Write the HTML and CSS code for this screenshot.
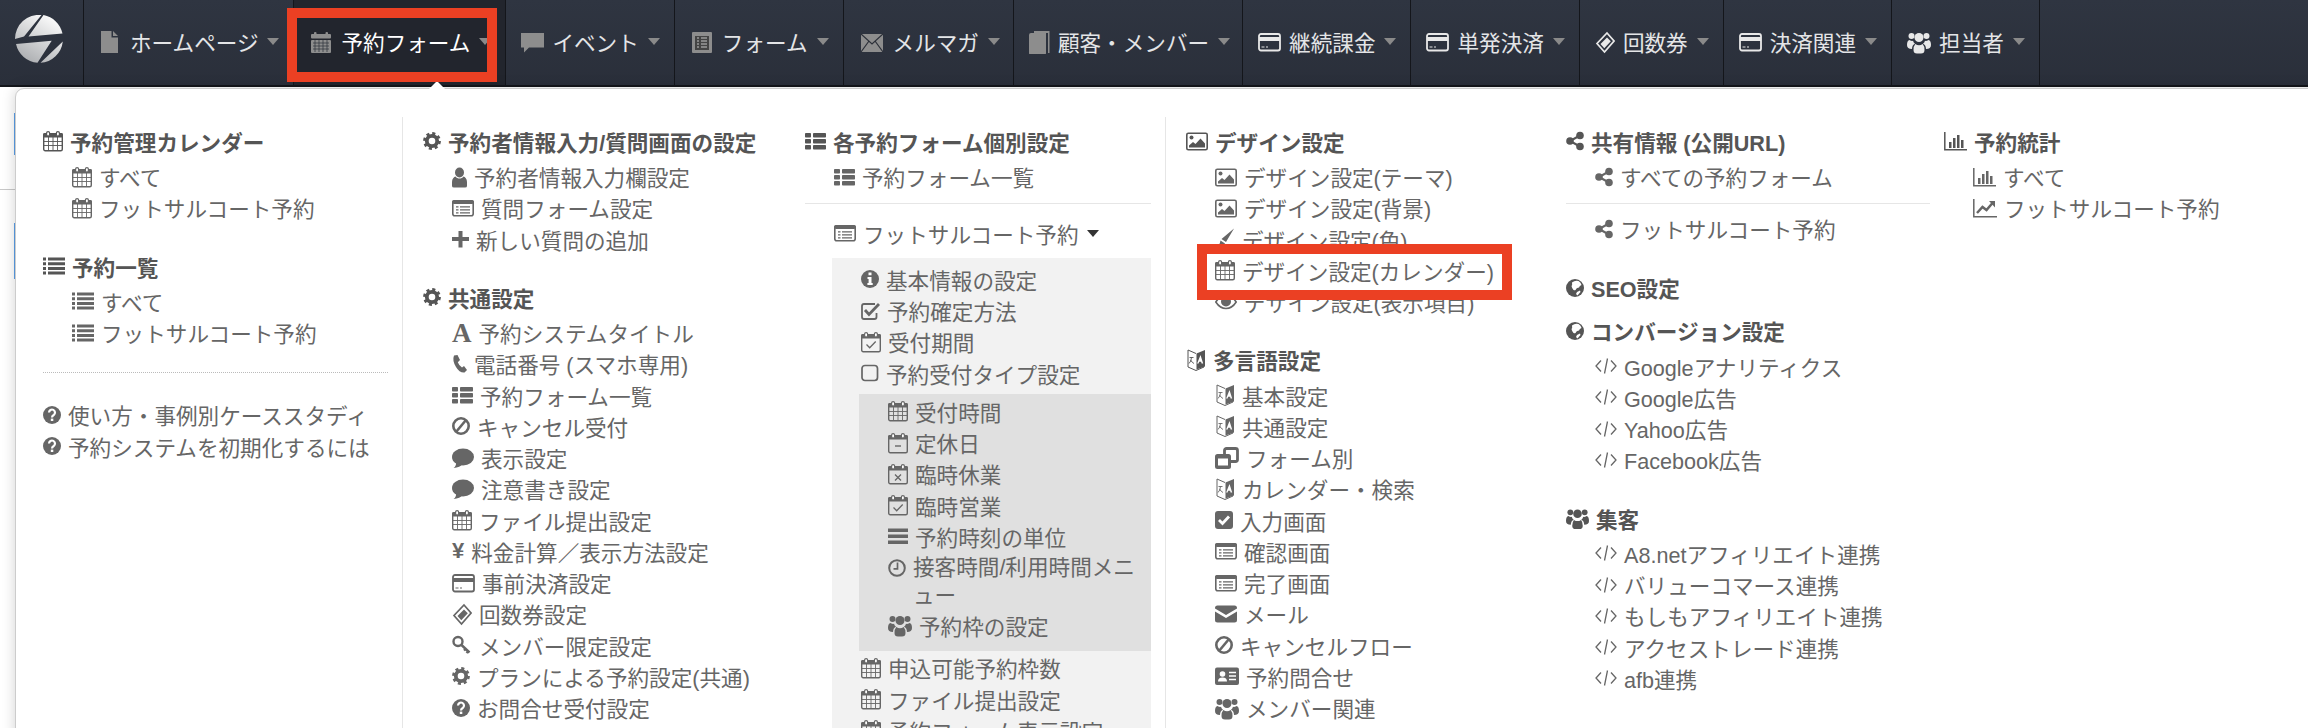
FILE: index.html
```html
<!DOCTYPE html>
<html lang="ja">
<head>
	<meta charset="UTF-8">
	<title>予約フォーム</title>
	<link rel="stylesheet" href="styles.css">
</head>
<body>
<svg class="sprite" aria-hidden="true">
	<defs>
		<linearGradient id="logograd" x1="0.8" y1="0" x2="0.2" y2="1">
			<stop offset="0" stop-color="#ffffff"/>
			<stop offset="1" stop-color="#a9abae"/>
		</linearGradient>
	</defs>
	<symbol id="calo" viewBox="0 0 20 24"><rect x=".7" y="4.7" width="18.6" height="17" rx="1.5" fill="none" stroke="currentColor" stroke-width="1.4"/><rect y="4" width="20" height="4.5" rx="1.5"/><rect x="3.6" y="2.6" width="3" height="4.4" rx="1.5" fill="#fff" stroke="currentColor" stroke-width="1.2"/><rect x="13.4" y="2.6" width="3" height="4.4" rx="1.5" fill="#fff" stroke="currentColor" stroke-width="1.2"/></symbol>
	<symbol id="cal" viewBox="0 0 20 24"><use href="#calo" width="20" height="24"/><path d="M1 12.5h18M1 16.5h18M5.5 8v13M10 8v13M14.5 8v13" fill="none" stroke="currentColor" stroke-width=".9"/></symbol>
	<symbol id="calcheck" viewBox="0 0 20 24"><use href="#calo" width="20" height="24"/><path d="M5.5 14.5l3.2 3.2 6-6.2" fill="none" stroke="currentColor" stroke-width="1.3"/></symbol>
	<symbol id="calminus" viewBox="0 0 20 24"><use href="#calo" width="20" height="24"/><path d="M7 15h6" fill="none" stroke="currentColor" stroke-width="1.4"/></symbol>
	<symbol id="caltimes" viewBox="0 0 20 24"><use href="#calo" width="20" height="24"/><path d="M7 12.5l6 6M13 12.5l-6 6" fill="none" stroke="currentColor" stroke-width="1.3"/></symbol>
	<symbol id="calnav" viewBox="0 0 20 24"><rect x="3" y="2" width="2.500" height="3" rx="1"/><rect x="14.500" y="2" width="2.500" height="3" rx="1"/><rect y="4" width="20" height="4.500" rx="1"/><rect y="10" width="20" height="13" rx="1"/><path d="M2 13h16M2 16h16M2 19h16M4 10v12M8 10v12M12 10v12M16 10v12" fill="none" stroke="#2c3039" stroke-width=".7"/></symbol>
	<symbol id="list" viewBox="0 0 22 24"><path d="M0 3.500h3v3H0zM5 3.500h17v3H5zM0 8.200h3v3H0zM5 8.200h17v3H5zM0 12.900h3v3H0zM5 12.900h17v3H5zM0 17.600h3v3H0zM5 17.600h17v3H5z"/></symbol>
	<symbol id="thlist" viewBox="0 0 21 24"><rect y="4" width="6" height="4.600" rx=".8"/><rect x="8" y="4" width="13" height="4.600" rx=".8"/><rect y="10" width="6" height="4.600" rx=".8"/><rect x="8" y="10" width="13" height="4.600" rx=".8"/><rect y="16" width="6" height="4.600" rx=".8"/><rect x="8" y="16" width="13" height="4.600" rx=".8"/></symbol>
	<symbol id="listalt" viewBox="0 0 22 24"><rect x=".8" y="4.800" width="20.400" height="15" rx="2" fill="none" stroke="currentColor" stroke-width="1.600"/><rect y="4" width="22" height="4" rx="2"/><path d="M4 10.800h2.500M8 10.800h10M4 13.800h2.500M8 13.800h10M4 16.800h2.500M8 16.800h10" fill="none" stroke="currentColor" stroke-width="1.300"/></symbol>
	<symbol id="gear" viewBox="0 0 18 24"><circle cx="9" cy="12" r="5.200" fill="none" stroke="currentColor" stroke-width="3.800"/><circle cx="9" cy="12" r="7.400" fill="none" stroke="currentColor" stroke-width="3" stroke-dasharray="3 2.810"/></symbol>
	<symbol id="user" viewBox="0 0 15 24"><ellipse cx="7.500" cy="7.500" rx="4.500" ry="5"/><path d="M0 21v-4c0-3.500 2-5 3.500-5.500 1 1.500 2.500 2 4 2s3-.5 4-2c1.500.5 3.500 2 3.500 5.500v4q0 1.500-2 1.500H2q-2 0-2-1.500z"/></symbol>
	<symbol id="plus" viewBox="0 0 17 24"><path d="M6.500 4h4v6h6.500v4h-6.500v6.500h-4V14H0v-4h6.500z"/></symbol>
	<symbol id="phone" viewBox="0 0 15 24"><path d="M2 3.500L5.500 3 8 8 5.800 10.200Q7 13.500 10 15.500L12 14 15 18 12.500 20.500Q7.500 21 4 15 0 8.500 2 3.500z"/></symbol>
	<symbol id="ban" viewBox="0 0 18 24"><circle cx="9" cy="12" r="7.700" fill="none" stroke="currentColor" stroke-width="2.600"/><path d="M4 18L14 6" fill="none" stroke="currentColor" stroke-width="2.600"/></symbol>
	<symbol id="comment" viewBox="0 0 22 24"><ellipse cx="11" cy="11" rx="11" ry="8.500"/><path d="M4 16Q4.500 20 1.500 22 8 21.500 11 18z"/></symbol>
	<symbol id="card" viewBox="0 0 23 24"><rect x="1" y="4" width="21" height="16.500" rx="2" fill="none" stroke="currentColor" stroke-width="1.800"/><rect x="1" y="7" width="21" height="4"/><path d="M3.500 17h3M8 17h2" fill="none" stroke="currentColor" stroke-width="1.200"/></symbol>
	<symbol id="ticket" viewBox="0 0 20 24"><path d="M12 3l7 8-9.500 11L2 13.500z" fill="none" stroke="currentColor" stroke-width="1.700"/><path d="M12 7.500l3.800 3.800-6.500 7L5.500 14z"/></symbol>
	<symbol id="key" viewBox="0 0 20 24"><circle cx="6" cy="8.500" r="4.500" fill="none" stroke="currentColor" stroke-width="2.400"/><path d="M9.500 12l8 7.500M14 15.500l-2 2M16.500 18l-2 2" fill="none" stroke="currentColor" stroke-width="2.400"/></symbol>
	<symbol id="quest" viewBox="0 0 18 24"><circle cx="9" cy="12" r="9"/><path d="M6 9.500a3 3 0 1 1 4.700 2.500q-1.700 1-1.700 2.500" fill="none" stroke="#fff" stroke-width="2.200"/><rect x="7.800" y="15.600" width="2.500" height="2.400" fill="#fff"/></symbol>
	<symbol id="info" viewBox="0 0 18 24"><circle cx="9" cy="12" r="9"/><path d="M7.500 5.500h3v2.700h-3zM6.500 10h4v6h1.200v2H6.400v-2h1.200v-4H6.500z" fill="#fff"/></symbol>
	<symbol id="pic" viewBox="0 0 22 24"><rect x=".8" y="4.300" width="20.400" height="16.500" rx="1.500" fill="none" stroke="currentColor" stroke-width="1.600"/><circle cx="5.500" cy="8.500" r="2"/><path d="M3 18.500v-2l4-3.500 2.500 2 5-5.500 4.500 5v4z"/></symbol>
	<symbol id="brush" viewBox="0 0 20 24"><path d="M19 1.500L11 15 6.500 12zM5.500 13.500L10 16.500Q8 21 1 21.500 4.500 19 5.500 13.500z"/></symbol>
	<symbol id="eye" viewBox="0 0 22 24"><path d="M.8 12Q5 5.500 11 5.500T21.200 12Q17 18.500 11 18.500T.8 12z" fill="none" stroke="currentColor" stroke-width="1.600"/><circle cx="11" cy="11.500" r="5"/></symbol>
	<symbol id="lang" viewBox="0 0 20 24"><path d="M10 5.500L2 2v17l8 3.500 8-3.500" fill="none" stroke="currentColor" stroke-width="1"/><path d="M10.500 5.500L19 2v16.500l-8.500 3z"/><path d="M14.500 7l2.700 8.500h-1.600l-.5-1.800h-2l-.5 1.800h-1.500z" fill="#fff"/><path d="M3.500 9.500h4M5.500 9.500q-.3 4-2.500 6M4.500 12q1.500 2.500 3.500 3.500" fill="none" stroke="currentColor" stroke-width=".9"/></symbol>
	<symbol id="clone" viewBox="0 0 24 24"><rect x="9.500" y="2.500" width="13" height="13" rx="2" fill="none" stroke="currentColor" stroke-width="2.800"/><rect y="8" width="16" height="15" rx="2.500"/><rect x="3" y="12.500" width="10" height="7" fill="#fff"/></symbol>
	<symbol id="checksq" viewBox="0 0 18 24"><rect y="3" width="18" height="18" rx="3"/><path d="M4 12l3.500 3.500L14 8.500" fill="none" stroke="#fff" stroke-width="2.800"/></symbol>
	<symbol id="checko" viewBox="0 0 19 24"><path d="M15.500 14v4q0 2-2 2H3q-2 0-2-2V7q0-2 2-2h11" fill="none" stroke="currentColor" stroke-width="1.800"/><path d="M4 11l4 4.500L18 5" fill="none" stroke="currentColor" stroke-width="2.800"/></symbol>
	<symbol id="square" viewBox="0 0 18 24"><rect x="1" y="4.500" width="15.500" height="15" rx="3" fill="none" stroke="currentColor" stroke-width="1.700"/></symbol>
	<symbol id="bars" viewBox="0 0 20 24"><path d="M0 4.500h20v3.500H0zM0 10.500h20v3.500H0zM0 16.500h20v3.500H0z"/></symbol>
	<symbol id="clock" viewBox="0 0 18 24"><circle cx="9" cy="12" r="7.800" fill="none" stroke="currentColor" stroke-width="2"/><path d="M9.500 6.500V12.800H5.500" fill="none" stroke="currentColor" stroke-width="1.700"/></symbol>
	<symbol id="mail" viewBox="0 0 22 24"><path d="M0 6q0-2.500 2.500-2.500h17Q22 3.500 22 6v.5L11 13 0 6.500zM0 9.500L11 16 22 9.500V18q0 2.500-2.500 2.500h-17Q0 20.500 0 18z"/></symbol>
	<symbol id="vcard" viewBox="0 0 24 24"><rect y="3.500" width="24" height="17.500" rx="2"/><circle cx="7.500" cy="10" r="2.800" fill="#fff"/><path d="M3 17.500q0-4 4.500-4T12 17.500z" fill="#fff"/><path d="M14 8.500h7M14 12h7M14 15.500h7" stroke="#fff" stroke-width="1.500"/></symbol>
	<symbol id="users" viewBox="0 0 24 24"><circle cx="4.500" cy="6" r="3"/><circle cx="19.500" cy="6" r="3"/><circle cx="12" cy="7.500" r="4.500"/><path d="M0 15q0-4.500 2.500-5 2 1.200 3.500 .8 .5 2 2 3-2.800 1-3 5.200Q0 19 0 15zM24 15q0-4.500-2.500-5-2 1.200-3.500 .8-.5 2-2 3 2.800 1 3 5.200 5 0 5-4zM6.500 20q0-4 1.800-6 3.700 2.500 7.400 0 1.800 2 1.800 6 0 3.500-3.500 3.500h-4Q6.500 23.500 6.500 20z"/></symbol>
	<symbol id="share" viewBox="0 0 18 24"><circle cx="4" cy="12" r="3.800"/><circle cx="14" cy="6.500" r="3.800"/><circle cx="14" cy="17.500" r="3.800"/><path d="M4 12L14 6.500M4 12L14 17.500" fill="none" stroke="currentColor" stroke-width="2"/></symbol>
	<symbol id="globe" viewBox="0 0 18 24"><circle cx="9" cy="12" r="9"/><path d="M6 6.500q3-2.500 6.500-1.500 2.500 1.500 3 4-2 .5-2.500 2.500-2 0-3 1.500 0 2-2.500 1-1.500-1.500-2-4 1-1 .5-3.500zM11 16l3-1.500 .5 1.500-3 3.500-1.500-1.500z" fill="#fff"/></symbol>
	<symbol id="code" viewBox="0 0 22 24"><path d="M6 6.500L1 12l5 5.500M16 6.500l5 5.500-5 5.500M12.500 4.500l-3 15" fill="none" stroke="currentColor" stroke-width="1.300"/></symbol>
	<symbol id="barchart" viewBox="0 0 23 24"><path d="M.8 3v17.700H23" fill="none" stroke="currentColor" stroke-width="1.500"/><path d="M5 13h2.500v6H5zM9 9h2.500v10H9zM13 6h2.500v13H13zM17 11h2.500v8H17z"/></symbol>
	<symbol id="linechart" viewBox="0 0 24 24"><path d="M.8 3v17.700H24" fill="none" stroke="currentColor" stroke-width="1.500"/><path d="M4 17l5.500-6 4 3 6-7" fill="none" stroke="currentColor" stroke-width="2.500"/><path d="M16 5h6v6.500z"/></symbol>
	<symbol id="file" viewBox="0 0 17 24"><path d="M0 1h10.500v6.500H17V23H0zM12 1l5 5h-5z"/></symbol>
	<symbol id="chat" viewBox="0 0 23 24"><path d="M0 3h23v14.500H8L3 22.500v-5H0z"/></symbol>
	<symbol id="form" viewBox="0 0 20 24"><rect y="2" width="20" height="21" rx="1"/><path d="M3 6h14v14H3z" fill="#444"/><path d="M5 8h2M9 8h6M5 11h2M9 11h6M5 14h2M9 14h6M5 17h2M9 17h6" stroke="#999" stroke-width="1.500"/></symbol>
	<symbol id="envx" viewBox="0 0 22 24"><rect y="4" width="22" height="18"/><path d="M0 4l11 10L22 4M0 22l8-11M22 22l-8-11" fill="none" stroke="#2c3039" stroke-width="1.200"/></symbol>
	<symbol id="copy" viewBox="0 0 21 24"><path d="M5 1h15.500v2H20.500v20H19V3H5z"/><path d="M0 5q0-2 2-2h15v20q0 2-2 2H2q-2 0-2-2z"/></symbol>
</svg>

<nav class="topbar">
	<a class="brand" href="#">
		<svg class="logo" width="48" height="48" viewBox="0 0 48 48"><path fill="url(#logograd)" d="M28.500 0A24 24 0 0 1 47.500 18.500L13.500 21.500zM0 24A24 24 0 0 1 26.500 0L9 21.500zM1 29L36.700 25.700 22.500 47.800A24 24 0 0 1 1 29zM25.500 47.800L47.800 26.500A24 24 0 0 1 25.500 47.800z"/></svg>
	</a>
	<a class="nav-item dimmed home" href="#"><svg class="nav-ic" width="17" height="24"><use href="#file"/></svg>ホームページ<i class="caret"></i></a>
	<a class="nav-item dimmed active" href="#"><svg class="nav-ic" width="20" height="24"><use href="#calnav"/></svg>予約フォーム<i class="caret"></i></a>
	<a class="nav-item snug" href="#"><svg class="nav-ic gray" width="23" height="24"><use href="#chat"/></svg>イベント<i class="caret"></i></a>
	<a class="nav-item dimmed" href="#"><svg class="nav-ic" width="20" height="24"><use href="#form"/></svg>フォーム<i class="caret"></i></a>
	<a class="nav-item dimmed mailmag" href="#"><svg class="nav-ic" width="22" height="24"><use href="#envx"/></svg>メルマガ<i class="caret"></i></a>
	<a class="nav-item snug customers" href="#"><svg class="nav-ic gray" width="21" height="24"><use href="#copy"/></svg>顧客・メンバー<i class="caret"></i></a>
	<a class="nav-item" href="#"><svg class="nav-ic" width="23" height="24"><use href="#card"/></svg>継続課金<i class="caret"></i></a>
	<a class="nav-item" href="#"><svg class="nav-ic" width="23" height="24"><use href="#card"/></svg>単発決済<i class="caret"></i></a>
	<a class="nav-item" href="#"><svg class="nav-ic" width="20" height="24"><use href="#ticket"/></svg>回数券<i class="caret"></i></a>
	<a class="nav-item" href="#"><svg class="nav-ic" width="23" height="24"><use href="#card"/></svg>決済関連<i class="caret"></i></a>
	<a class="nav-item" href="#"><svg class="nav-ic" width="24" height="24"><use href="#users"/></svg>担当者<i class="caret"></i></a>
</nav>

<div class="backdrop">
	<div class="blue blue-a"></div>
	<div class="rule"></div>
	<div class="blue blue-b"></div>
</div>

<div class="mega">
	<div class="mega-grid">
		<section class="col sep">
			<h4 class="head"><svg class="ic" width="20" height="24"><use href="#cal"/></svg>予約管理カレンダー</h4>
			<a class="row in" href="#"><svg class="ic" width="20" height="24"><use href="#cal"/></svg>すべて</a>
			<a class="row in" href="#"><svg class="ic" width="20" height="24"><use href="#cal"/></svg>フットサルコート予約</a>
			<h4 class="head group"><svg class="ic" width="22" height="24"><use href="#list"/></svg>予約一覧</h4>
			<a class="row in" href="#"><svg class="ic" width="22" height="24"><use href="#list"/></svg>すべて</a>
			<a class="row in" href="#"><svg class="ic" width="22" height="24"><use href="#list"/></svg>フットサルコート予約</a>
			<hr class="dots">
			<a class="row" href="#"><svg class="ic" width="18" height="24"><use href="#quest"/></svg>使い方・事例別ケーススタディ</a>
			<a class="row" href="#"><svg class="ic" width="18" height="24"><use href="#quest"/></svg>予約システムを初期化するには</a>
		</section>

		<section class="col">
			<h4 class="head"><svg class="ic" width="18" height="24"><use href="#gear"/></svg>予約者情報入力/質問画面の設定</h4>
			<a class="row in" href="#"><svg class="ic" width="15" height="24"><use href="#user"/></svg>予約者情報入力欄設定</a>
			<a class="row in" href="#"><svg class="ic" width="22" height="24"><use href="#listalt"/></svg>質問フォーム設定</a>
			<a class="row in" href="#"><svg class="ic" width="17" height="24"><use href="#plus"/></svg>新しい質問の追加</a>
			<h4 class="head group"><svg class="ic" width="18" height="24"><use href="#gear"/></svg>共通設定</h4>
			<a class="row in" href="#"><span class="ic glyph serif">A</span>予約システムタイトル</a>
			<a class="row in" href="#"><svg class="ic" width="15" height="24"><use href="#phone"/></svg>電話番号 (スマホ専用)</a>
			<a class="row in" href="#"><svg class="ic" width="21" height="24"><use href="#thlist"/></svg>予約フォーム一覧</a>
			<a class="row in" href="#"><svg class="ic" width="18" height="24"><use href="#ban"/></svg>キャンセル受付</a>
			<a class="row in" href="#"><svg class="ic" width="22" height="24"><use href="#comment"/></svg>表示設定</a>
			<a class="row in" href="#"><svg class="ic" width="22" height="24"><use href="#comment"/></svg>注意書き設定</a>
			<a class="row in" href="#"><svg class="ic" width="20" height="24"><use href="#cal"/></svg>ファイル提出設定</a>
			<a class="row in" href="#"><span class="ic glyph">¥</span>料金計算／表示方法設定</a>
			<a class="row in" href="#"><svg class="ic" width="23" height="24"><use href="#card"/></svg>事前決済設定</a>
			<a class="row in" href="#"><svg class="ic" width="20" height="24"><use href="#ticket"/></svg>回数券設定</a>
			<a class="row in" href="#"><svg class="ic" width="20" height="24"><use href="#key"/></svg>メンバー限定設定</a>
			<a class="row in" href="#"><svg class="ic" width="18" height="24"><use href="#gear"/></svg>プランによる予約設定(共通)</a>
			<a class="row in" href="#"><svg class="ic" width="18" height="24"><use href="#quest"/></svg>お問合せ受付設定</a>
		</section>

		<section class="col sep">
			<h4 class="head"><svg class="ic" width="21" height="24"><use href="#thlist"/></svg>各予約フォーム個別設定</h4>
			<a class="row in" href="#"><svg class="ic" width="21" height="24"><use href="#thlist"/></svg>予約フォーム一覧</a>
			<hr class="line">
			<a class="row in" href="#"><svg class="ic" width="22" height="24"><use href="#listalt"/></svg>フットサルコート予約<i class="caret dark"></i></a>
			<div class="sub">
				<a class="row" href="#"><svg class="ic" width="18" height="24"><use href="#info"/></svg>基本情報の設定</a>
				<a class="row" href="#"><svg class="ic" width="19" height="24"><use href="#checko"/></svg>予約確定方法</a>
				<a class="row" href="#"><svg class="ic" width="20" height="24"><use href="#calcheck"/></svg>受付期間</a>
				<a class="row" href="#"><svg class="ic" width="18" height="24"><use href="#square"/></svg>予約受付タイプ設定</a>
				<div class="subsub">
					<a class="row" href="#"><svg class="ic" width="20" height="24"><use href="#cal"/></svg>受付時間</a>
					<a class="row" href="#"><svg class="ic" width="20" height="24"><use href="#calminus"/></svg>定休日</a>
					<a class="row" href="#"><svg class="ic" width="20" height="24"><use href="#caltimes"/></svg>臨時休業</a>
					<a class="row" href="#"><svg class="ic" width="20" height="24"><use href="#calcheck"/></svg>臨時営業</a>
					<a class="row" href="#"><svg class="ic" width="20" height="24"><use href="#bars"/></svg>予約時刻の単位</a>
					<a class="row wrap" href="#"><svg class="ic" width="18" height="24"><use href="#clock"/></svg><span>接客時間/利用時間メニュー</span></a>
					<a class="row" href="#"><svg class="ic" width="24" height="24"><use href="#users"/></svg>予約枠の設定</a>
				</div>
				<a class="row" href="#"><svg class="ic" width="20" height="24"><use href="#cal"/></svg>申込可能予約枠数</a>
				<a class="row" href="#"><svg class="ic" width="20" height="24"><use href="#cal"/></svg>ファイル提出設定</a>
				<a class="row" href="#"><svg class="ic" width="20" height="24"><use href="#cal"/></svg>予約フォーム表示設定</a>
			</div>
		</section>

		<section class="col">
			<h4 class="head"><svg class="ic" width="22" height="24"><use href="#pic"/></svg>デザイン設定</h4>
			<a class="row in" href="#"><svg class="ic" width="22" height="24"><use href="#pic"/></svg>デザイン設定(テーマ)</a>
			<a class="row in" href="#"><svg class="ic" width="22" height="24"><use href="#pic"/></svg>デザイン設定(背景)</a>
			<a class="row in" href="#"><svg class="ic" width="20" height="24"><use href="#brush"/></svg>デザイン設定(色)</a>
			<a class="row in" href="#"><svg class="ic" width="20" height="24"><use href="#cal"/></svg>デザイン設定(カレンダー)</a>
			<a class="row in" href="#"><svg class="ic" width="22" height="24"><use href="#eye"/></svg>デザイン設定(表示項目)</a>
			<h4 class="head group"><svg class="ic" width="20" height="24"><use href="#lang"/></svg>多言語設定</h4>
			<a class="row in" href="#"><svg class="ic" width="20" height="24"><use href="#lang"/></svg>基本設定</a>
			<a class="row in" href="#"><svg class="ic" width="20" height="24"><use href="#lang"/></svg>共通設定</a>
			<a class="row in" href="#"><svg class="ic" width="24" height="24"><use href="#clone"/></svg>フォーム別</a>
			<a class="row in" href="#"><svg class="ic" width="20" height="24"><use href="#lang"/></svg>カレンダー・検索</a>
			<a class="row in" href="#"><svg class="ic" width="18" height="24"><use href="#checksq"/></svg>入力画面</a>
			<a class="row in" href="#"><svg class="ic" width="22" height="24"><use href="#listalt"/></svg>確認画面</a>
			<a class="row in" href="#"><svg class="ic" width="22" height="24"><use href="#listalt"/></svg>完了画面</a>
			<a class="row in" href="#"><svg class="ic" width="22" height="24"><use href="#mail"/></svg>メール</a>
			<a class="row in" href="#"><svg class="ic" width="18" height="24"><use href="#ban"/></svg>キャンセルフロー</a>
			<a class="row in" href="#"><svg class="ic" width="24" height="24"><use href="#vcard"/></svg>予約問合せ</a>
			<a class="row in" href="#"><svg class="ic" width="24" height="24"><use href="#users"/></svg>メンバー関連</a>
		</section>

		<section class="col">
			<h4 class="head"><svg class="ic" width="18" height="24"><use href="#share"/></svg>共有情報 (公開URL)</h4>
			<a class="row in" href="#"><svg class="ic" width="18" height="24"><use href="#share"/></svg>すべての予約フォーム</a>
			<hr class="line short">
			<a class="row in" href="#"><svg class="ic" width="18" height="24"><use href="#share"/></svg>フットサルコート予約</a>
			<h4 class="head seo"><svg class="ic" width="18" height="24"><use href="#globe"/></svg>SEO設定</h4>
			<h4 class="head conv"><svg class="ic" width="18" height="24"><use href="#globe"/></svg>コンバージョン設定</h4>
			<a class="row in" href="#"><svg class="ic" width="22" height="24"><use href="#code"/></svg>Googleアナリティクス</a>
			<a class="row in" href="#"><svg class="ic" width="22" height="24"><use href="#code"/></svg>Google広告</a>
			<a class="row in" href="#"><svg class="ic" width="22" height="24"><use href="#code"/></svg>Yahoo広告</a>
			<a class="row in" href="#"><svg class="ic" width="22" height="24"><use href="#code"/></svg>Facebook広告</a>
			<h4 class="head group"><svg class="ic" width="23" height="24"><use href="#users"/></svg>集客</h4>
			<a class="row in" href="#"><svg class="ic" width="22" height="24"><use href="#code"/></svg>A8.netアフィリエイト連携</a>
			<a class="row in" href="#"><svg class="ic" width="22" height="24"><use href="#code"/></svg>バリューコマース連携</a>
			<a class="row in" href="#"><svg class="ic" width="22" height="24"><use href="#code"/></svg>もしもアフィリエイト連携</a>
			<a class="row in" href="#"><svg class="ic" width="22" height="24"><use href="#code"/></svg>アクセストレード連携</a>
			<a class="row in" href="#"><svg class="ic" width="22" height="24"><use href="#code"/></svg>afb連携</a>
		</section>

		<section class="col">
			<h4 class="head"><svg class="ic" width="23" height="24"><use href="#barchart"/></svg>予約統計</h4>
			<a class="row in" href="#"><svg class="ic" width="23" height="24"><use href="#barchart"/></svg>すべて</a>
			<a class="row in" href="#"><svg class="ic" width="24" height="24"><use href="#linechart"/></svg>フットサルコート予約</a>
		</section>
	</div>
</div>

<i class="arrow"></i>
<div class="mark mark-nav"></div>
<div class="mark mark-item"></div>
</body>
</html>
```

FILE: styles.css
```css
html, body {
	margin: 0;
	height: 728px;
	overflow: hidden;
	background: #fff;
}
body {
	position: relative;
	font-family: "Liberation Sans", "Noto Sans CJK JP", sans-serif;
	font-size: 21.6px;
	color: #666;
}
a {
	color: inherit;
	text-decoration: none;
}
.sprite {
	position: absolute;
	width: 0;
	height: 0;
}

/* top bar */
.topbar {
	display: flex;
	height: 85px;
	background: linear-gradient(#2f3541, #2a2f3a);
	border-bottom: 2px solid #14161b;
}
.brand {
	display: flex;
	align-items: center;
	width: 84px;
	padding-left: 15px;
	box-sizing: border-box;
	border-right: 1px solid #14161b;
}
.logo {
	margin-top: -7px;
}
.nav-item {
	display: flex;
	align-items: center;
	padding: 0 14px 2px 15px;
	color: #e4e5e7;
	border-right: 1px solid #14161b;
	white-space: nowrap;
}
.nav-item.active {
	background: #22252d;
	color: #fff;
}
.nav-ic {
	flex: none;
	margin-right: 8px;
	fill: currentColor;
	color: #e8e8e8;
}
.nav-ic.gray,
.dimmed .nav-ic {
	color: #8d8d8d;
}
.dimmed {
	padding-left: 17px;
}
.dimmed .nav-ic {
	margin-right: 10px;
}
.home .nav-ic {
	margin-right: 12px;
}
.mailmag {
	padding-right: 13px;
}
.customers {
	padding-right: 12px;
}
.caret {
	display: inline-block;
	width: 0;
	height: 0;
	margin-left: 9px;
	border-left: 6px solid transparent;
	border-right: 6px solid transparent;
	border-top: 7px solid #8a8a8a;
}
.caret.dark {
	border-top-color: #333;
	margin-left: 8px;
}

/* what lies under the dropdown */
.backdrop {
	width: 15px;
}
.blue {
	width: 1px;
	margin-left: 14px;
	background: #5a9fe8;
}
.blue-a {
	height: 42px;
	margin-top: 26px;
}
.blue-b {
	height: 56px;
	margin-top: 33px;
}
.rule {
	height: 1px;
	margin-top: 34px;
	background: #c8c8c8;
}

/* dropdown */
.mega {
	position: absolute;
	left: 15px;
	top: 88px;
	right: -12px;
	bottom: -12px;
	background: #fff;
	border: 1px solid #ccc;
	border-radius: 9px 0 0 0;
	box-shadow: 0 0 14px rgba(0, 0, 0, .18);
	padding-left: 27px;
}
.arrow {
	position: absolute;
	left: 428px;
	top: 81px;
	width: 0;
	height: 0;
	border-left: 9px solid transparent;
	border-right: 9px solid transparent;
	border-bottom: 9px solid #fff;
}
.mega-grid {
	display: grid;
	grid-template-columns: 380px 382px 381px 380px 378px 1fr;
	height: 700px;
	margin-top: 28px;
}
.col {
	padding-top: 8.7px;
	min-width: 0;
}
.col.sep {
	border-right: 1px solid #e6e6e6;
	margin-right: 20px;
}
.head {
	display: flex;
	align-items: center;
	height: 31.25px;
	margin: 0 0 4px;
	font-size: 21.6px;
	font-weight: bold;
	color: #555;
	white-space: nowrap;
}
.head.group {
	margin-top: 27px;
}
.head.seo {
	margin-top: 27.5px;
	margin-bottom: 0;
}
.head.conv {
	margin-top: 12px;
}
.row {
	display: flex;
	align-items: center;
	height: 31.25px;
	white-space: nowrap;
}
.row.in {
	margin-left: 29px;
}
.ic {
	flex: none;
	margin-right: 7px;
	fill: currentColor;
}
.glyph {
	font-weight: bold;
	font-size: 22px;
	line-height: 24px;
}
.glyph.serif {
	font-family: "Liberation Serif", serif;
	font-size: 27px;
}
.dots {
	margin: 24px 14px 26px 0;
	border: 0;
	border-top: 1px dotted #bbb;
}
.line {
	margin: 11px 14px 13.3px 0;
	border: 0;
	border-top: 1px solid #e6e6e6;
}
.line.short {
	margin-bottom: 9px;
}

/* nested settings of one form */
.sub {
	margin: 9.2px 14px 0 27px;
	padding: 5.8px 0 0 29px;
	background: #f2f2f2;
}
.subsub {
	margin: 5px 0 1.4px -2px;
	padding: 2px 5px 10px 29px;
	background: #e0e0e0;
}
.row.wrap {
	height: auto;
	align-items: flex-start;
	padding-top: 1.6px;
	line-height: 28px;
	white-space: normal;
}
.row.wrap .ic {
	margin-top: 2px;
}

/* red marks drawn over the screenshot */
.mark {
	position: absolute;
	box-sizing: border-box;
	border: 10px solid #eb4023;
}
.mark-nav {
	left: 287px;
	top: 8px;
	width: 210px;
	height: 74px;
}
.mark-item {
	left: 1197px;
	top: 244px;
	width: 315px;
	height: 56px;
}
```
